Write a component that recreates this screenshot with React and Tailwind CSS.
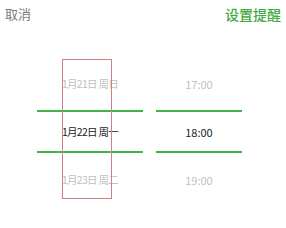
import React from 'react';

const font = { fontFamily: '"Noto Sans CJK SC", "Noto Sans", sans-serif' };

const dates = [
  { label: '1月21日 周日', active: false },
  { label: '1月22日 周一', active: true },
  { label: '1月23日 周二', active: false },
];
const times = [
  { label: '17:00', active: false },
  { label: '18:00', active: true },
  { label: '19:00', active: false },
];

const Column = ({ items, width, textClass }) => (
  <div className={`relative flex flex-col ${width}`}>
    {items.map((it) => (
      <div
        key={it.label}
        className={`h-[48px] flex items-center justify-center whitespace-nowrap ${textClass} ${it.active ? 'text-[#222]' : 'text-[#c0c0c0]'}`}
      >
        {it.label}
      </div>
    ))}
    <div className="absolute left-0 right-0 top-[50px] h-[2px] bg-[#45b14b]" />
    <div className="absolute left-0 right-0 top-[91px] h-[2px] bg-[#45b14b]" />
  </div>
);

export default function App() {
  return (
    <div className="relative w-[286px] h-[228px] bg-white overflow-hidden" style={font}>
      <div className="h-[28px] flex items-center justify-between pl-[5px] pr-[5px]">
        <span className="text-[13px] text-[#7a7a7a]">取消</span>
        <span className="text-[14px] text-[#3faa45] font-medium">设置提醒</span>
      </div>

      <div className="mt-[32px] flex pl-[37px] gap-[13px]">
        <Column items={dates} width="w-[106px]" textClass="text-[10.5px] tracking-[-0.7px]" />
        <Column items={times} width="w-[86px]" textClass="text-[11px]" />
      </div>

      <div className="absolute left-[62px] top-[59px] w-[50px] h-[140px] border border-[#cd8080]" />
    </div>
  );
}
